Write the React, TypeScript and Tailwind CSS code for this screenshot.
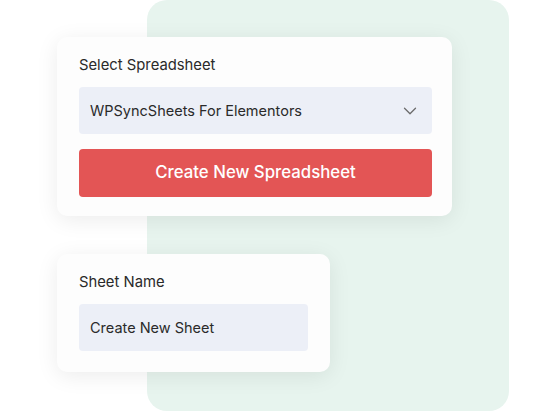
import { ChevronDown } from "lucide-react";

export default function App() {
  return (
    <div
      className="relative w-[540px] h-[412px] bg-white overflow-hidden"
      style={{ fontFamily: "Inter, 'Open Sans', sans-serif" }}
    >
      {/* decorative green panel behind the cards */}
      <div className="absolute left-[147px] top-0 w-[362px] h-[411px] rounded-[20px] bg-[#e7f4ee]" />

      <div className="relative flex flex-col gap-[38px] pl-[57px] pt-[37px]">
        <div className="w-[395px] h-[179px] rounded-[10px] bg-[#fdfdfd] shadow-[0_4px_22px_rgba(0,0,0,0.08)] pl-[22px] pr-[20px] pt-[19px]">
          <div className="text-[14.8px] text-[#2a2a2a] leading-[18px]">Select Spreadsheet</div>
          <div className="mt-[13px] h-[47px] rounded-[4px] bg-[#eceff7] flex items-center justify-between pl-[11px] pr-[11px]">
            <span className="text-[14.5px] text-[#2a2a2a]">WPSyncSheets For Elementors</span>
            <ChevronDown className="w-[22px] h-[22px] text-[#6b6b6b]" strokeWidth={1.4} />
          </div>
          <button className="mt-[15px] w-full h-[48px] rounded-[4px] bg-[#e35555] text-white text-[16.8px] font-medium">
            Create New Spreadsheet
          </button>
        </div>

        <div className="w-[273px] h-[118px] rounded-[10px] bg-[#fdfdfd] shadow-[0_4px_22px_rgba(0,0,0,0.08)] pl-[22px] pr-[22px] pt-[19px]">
          <div className="text-[14.8px] text-[#2a2a2a] leading-[18px]">Sheet Name</div>
          <div className="mt-[13px] h-[47px] rounded-[4px] bg-[#eceff7] flex items-center pl-[11px]">
            <span className="text-[14.5px] text-[#2a2a2a]">Create New Sheet</span>
          </div>
        </div>
      </div>
    </div>
  );
}
